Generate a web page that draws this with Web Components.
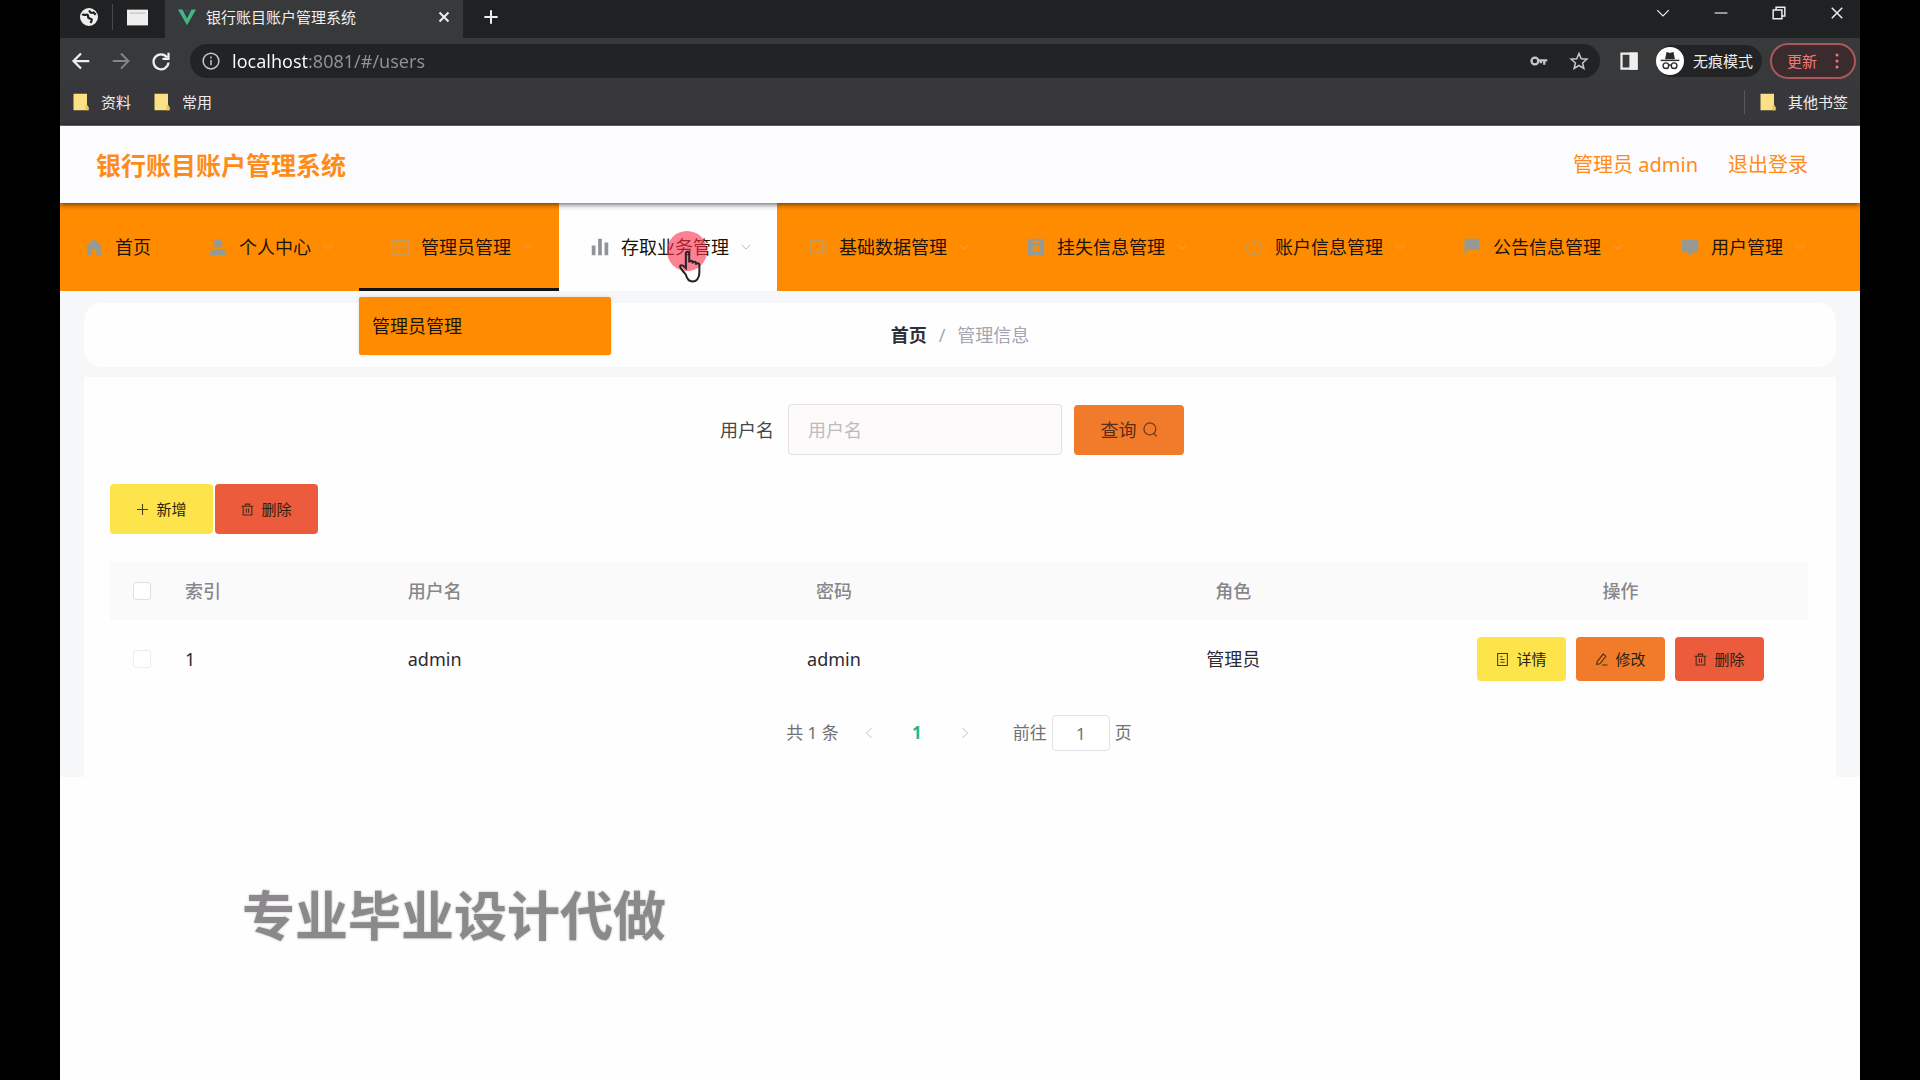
<!DOCTYPE html>
<html lang="zh-CN">
<head>
<meta charset="utf-8">
<title>银行账目账户管理系统</title>
<style>
body{margin:0;background:#000;font-family:"Noto Sans","Noto Sans CJK SC",sans-serif;font-size:18px;line-height:24px;color:#2b2b2f}
</style>
</head>
<body>
<browser-window></browser-window>
<script>
const ICONS={
globe:'<circle cx="12" cy="12" r="11" fill="currentColor"/><path d="M3 8c3 3 5 0 7 1s-1 4 3 5 3 2 1 6M13 3c-1 3 2 4 5 3l3 3" fill="none" stroke="#202122" stroke-width="3"/>',
vue:'<path d="M0 2h6l6 12 6-12h6L12 23z" fill="#42b883" stroke="none"/><path d="M8 2l4 7 4-7z" fill="#35495e" stroke="none"/>',
window:'<path d="M0 3h24v18H0z" fill="#eee" stroke="none"/><path d="M3 6h18v2H3z" fill="#cfcfcf" stroke="none"/>',
close:'<path d="M3 3l18 18M21 3L3 21"/>',
plus:'<path d="M12 2v20M2 12h20"/>',
down:'<path d="M2 7l10 10L22 7"/>',
up:'<path d="M2 17L12 7l10 10"/>',
left:'<path d="M17 2L7 12l10 10"/>',
right:'<path d="M7 2l10 10L7 22"/>',
min:'<path d="M1 12h22"/>',
restore:'<path d="M2 7h15v15H2zM7 7V2h15v15h-5"/>',
back:'<path d="M23 12H3M12 2L2 12l10 10"/>',
forward:'<path d="M1 12h20M12 2l10 10-10 10"/>',
reload:'<path d="M20 7a10 10 0 1 0 2 7M22 1v8h-8"/>',
info:'<circle cx="12" cy="12" r="10.500"/><path d="M12 10.500v7M12 6v2.500"/>',
key:'<circle cx="6.500" cy="12" r="4.500"/><path d="M11 11h12M19 11v6M14.500 11v4"/>',
star:'<path d="M12 2l3 7 7.500.600-5.700 5 1.700 7.400L12 18l-6.500 4 1.700-7.400-5.700-5L9 9z"/>',
panel:'<path d="M2 2h20v20H2z"/><path d="M14 2h8v20h-8z" fill="currentColor"/>',
spy:'<circle cx="12" cy="12" r="12" fill="#fff" stroke="none"/><g stroke="#2b2c2e" stroke-width="1.200"><path d="M8.500 10l1-5 2.500.800L14.500 5l1 5z" fill="#2b2c2e"/><path d="M4 11.500h16"/><circle cx="8.500" cy="16" r="2.400"/><circle cx="15.500" cy="16" r="2.400"/><path d="M11 15.500h2"/></g>',
dots:'<g fill="currentColor" stroke="none"><circle cx="12" cy="4" r="2"/><circle cx="12" cy="12" r="2"/><circle cx="12" cy="20" r="2"/></g>',
folder:'<path d="M2 1h18v15l2 3v4H2z" fill="#fbe184" stroke="none"/><path d="M18 16h2l2 3v4h-4z" fill="#e9c658" stroke="none"/>',
home:'<path d="M12 1l12 12h-3v10h-6v-8H9v8H3V13H0z" fill="currentColor" stroke="none"/>',
user:'<g fill="currentColor" stroke="none"><circle cx="12" cy="7" r="6"/><path d="M1 23c0-6 3-8 8-8h6c5 0 8 2 8 8z"/></g>',
mail:'<path d="M1 3h23v19H1zM5 5l7 8 8-8"/>',
bars:'<path d="M1 10h5v13H1zM9.500 1h5v22h-5zM18 6h5v17h-5z" fill="currentColor" stroke="none"/>',
square:'<path d="M2 3h16v17H2zM22 3v19"/>',
sheet:'<path fill-rule="evenodd" d="M1 1h22v22H1zM8 4v3h8V4zM8 11v7h8v-7zM11 13h2v3h-2z" fill="currentColor" stroke="none"/>',
power:'<path d="M7 3.500a10 10 0 1 0 10 0M12 1v10"/>',
flag:'<path d="M2 1h20v15H6l-4 7z" fill="currentColor" stroke="none"/>',
chat:'<path d="M1 2h22v17h-6l-5 4-5-4H1z" fill="currentColor" stroke="none"/>',
search:'<circle cx="11" cy="11" r="9.500"/><path d="M17 18l5 5"/>',
trash:'<path d="M1 6h22M8 6V2h8v4M4 6v16h16V6M10 10v8M14 10v8"/>',
doc:'<path d="M3 1h18v22H3zM8 7h4M8 12h8M8 17h8"/>',
edit:'<path d="M4 16L15 2l5 4L9 20l-6 1zM13 22h10"/>',
hand:'<path d="M7 22C5 19 1 16 2 14c1-1 3 0 5 2V3c0-2 3-2 3 0v8c0-2 3-2 3 0v1c0-2 3-2 3 0v1c0-2 3-1 3 0v7c0 4-2 8-6 8-3 0-5-2-6-6z"/>'
};
const component=(tag,css,html)=>customElements.define(tag,class extends HTMLElement{
  constructor(){
    super();
    const t=document.createElement('template');
    t.innerHTML='<style>*{box-sizing:border-box}button,input{font:inherit;color:inherit;margin:0;border:0;padding:0;background:none;outline:0}a{color:inherit;text-decoration:none}'+css+'</style>'+(typeof html==='string'?html:html(this));
    this.attachShadow({mode:'open'}).append(t.content.cloneNode(true));
  }
});

component('ui-icon',
 ':host{display:inline-flex;flex:none;width:var(--size,18px);height:var(--size,18px)}svg{width:100%;height:100%;fill:none;stroke:currentColor;stroke-width:var(--stroke,2);overflow:visible}',
 el=>`<svg viewBox="0 0 24 24" aria-hidden="true">${ICONS[el.getAttribute('name')]}</svg>`);

component('browser-tabs',`
:host{display:flex;height:38px;background:#202122;color:#eee;font-size:15px}
.pins{display:flex;align-items:center;gap:14px;width:105px;padding:0 0 4px 20px}
.pins i{width:1px;height:26px;background:#48494b}
.tab{display:flex;align-items:center;width:298px;padding:0 13px 4px;gap:10px;background:#38393b}
.tab span{flex:1}
button{display:flex;align-items:center;justify-content:center}
.new{width:56px;padding-bottom:4px}
.controls{display:flex;gap:44px;margin-left:auto;padding:0 16px 12px 0}
`,`<div class="pins"><ui-icon name="globe"></ui-icon><i></i><ui-icon name="window" style="--size:21px"></ui-icon></div>
<div class="tab"><ui-icon name="vue"></ui-icon><span>银行账目账户管理系统</span><button aria-label="关闭标签页"><ui-icon name="close" style="--size:12px;--stroke:4"></ui-icon></button></div>
<button class="new" aria-label="新标签页"><ui-icon name="plus" style="--size:16px;--stroke:3"></ui-icon></button>
<div class="controls"><button aria-label="搜索标签页"><ui-icon name="down" style="--size:14px"></ui-icon></button><button aria-label="最小化"><ui-icon name="min" style="--size:14px"></ui-icon></button><button aria-label="还原"><ui-icon name="restore" style="--size:14px;--stroke:2.500"></ui-icon></button><button aria-label="关闭"><ui-icon name="close" style="--size:14px;--stroke:2.500"></ui-icon></button></div>`);

component('address-bar',`
:host{display:flex;align-items:center;height:46px;padding:0 4px 0 12px;background:#38393b;color:#eee;font-size:15px}
button{display:flex;align-items:center}
.moves{display:flex;gap:22px;margin-right:20px}
.moves button:nth-child(2){color:#858688}
.field{display:flex;align-items:center;flex:1;height:34px;padding:0 12px;border-radius:17px;background:#222325;color:#c8c8c8}
.field input{flex:1;min-width:0;height:34px;margin-left:12px;font-size:18px;color:#919294;background:linear-gradient(90deg,#fff 77px,#919294 77px);-webkit-background-clip:text;background-clip:text;-webkit-text-fill-color:transparent}
.field button{margin-left:22px}
.side{margin:0 18px 0 20px}
.private{height:32px;gap:9px;padding-right:9px;border-radius:16px;background:#222325}
.update{height:36px;gap:11px;margin-left:8px;padding:0 8px 0 15px;border:2px solid #a9585c;border-radius:18px;background:#3a2c2e;color:#f07a75}
`,`<div class="moves"><button aria-label="后退"><ui-icon name="back" style="--stroke:3"></ui-icon></button><button aria-label="前进"><ui-icon name="forward" style="--stroke:2.500"></ui-icon></button><button aria-label="重新加载"><ui-icon name="reload" style="--stroke:3"></ui-icon></button></div>
<div class="field"><ui-icon name="info"></ui-icon><input aria-label="地址" value="localhost:8081/#/users"><button aria-label="密码"><ui-icon name="key" style="--stroke:3"></ui-icon></button><button aria-label="收藏"><ui-icon name="star"></ui-icon></button></div>
<button class="side" aria-label="侧边栏"><ui-icon name="panel" style="--stroke:3"></ui-icon></button>
<button class="private"><ui-icon name="spy" style="--size:28px"></ui-icon>无痕模式</button>
<button class="update">更新<ui-icon name="dots"></ui-icon></button>`);

component('bookmark-bar',`
:host{display:flex;align-items:center;gap:22px;height:42px;padding:0 12px 6px;background:#38373b;border-bottom:1px solid #77767a;color:#eee;font-size:15px}
a{display:flex;align-items:center;gap:11px}
.other{margin-left:auto;border-left:1px solid #58585a;padding-left:14px}
`,`<a href="#"><ui-icon name="folder"></ui-icon>资料</a><a href="#"><ui-icon name="folder"></ui-icon>常用</a><a class="other" href="#"><ui-icon name="folder"></ui-icon>其他书签</a>`);

component('app-header',`
:host{display:flex;align-items:center;height:77px;padding:0 52px 0 36px;background:#fcfcfe;color:#ff8c1a;font-size:20px;position:relative;z-index:2;box-shadow:0 1px 6px rgba(0,0,0,.7)}
h1{flex:1;margin:0;font-size:25px;line-height:32px;font-weight:700}
a{margin-left:30px}
`,`<h1>银行账目账户管理系统</h1><span>管理员 admin</span><a href="#">退出登录</a>`);

component('nav-item',`
:host{display:block;position:relative;color:#1c1408}
a{display:flex;align-items:center;height:88px;gap:12px;padding:0 26px 0 32px;white-space:nowrap}
ui-icon{color:#979a92}
.arrow{--size:10px;color:#ff9d5d}
:host([plain]) a{padding:0 26px 0 25px}
:host([plain]) .arrow{display:none}
:host([open]) a{border-bottom:3px solid #111;padding-top:3px}
:host([faint]) .lead{color:#c79b5c}
:host([hot]){background:#fefefe}
:host([hot]) .lead{color:#909399}
:host([hot]) .arrow{color:#a9abb0}
`,el=>`<a href="#"><ui-icon class="lead" name="${el.getAttribute('icon')}"></ui-icon><span><slot></slot></span><ui-icon class="arrow" name="${el.hasAttribute('open')?'up':'down'}"></ui-icon></a><slot name="over"></slot>`);

component('sub-menu',`
:host{position:absolute;z-index:3;top:94px;left:0;width:252px;background:#ff8c00;border-radius:2px;box-shadow:0 0 4px rgba(0,0,0,.12)}
a{display:flex;align-items:center;height:58px;padding:0 13px}
`,`<a href="#"><slot></slot></a>`);

component('click-pointer',`
:host{position:absolute;z-index:3;left:108px;top:28px;width:40px;height:40px;border-radius:50%;background:rgba(248,45,75,.6);color:#24242c;pointer-events:none}
ui-icon{--size:27px;--stroke:1.800;position:absolute;left:11px;top:19px}
`,`<ui-icon name="hand"></ui-icon>`);

component('app-nav',`
:host{display:flex;height:88px;background:#ff8c00}
nav{display:flex}
`,`<nav><nav-item icon="home" plain>首页</nav-item><nav-item icon="user">个人中心</nav-item><nav-item icon="mail" open faint>管理员管理<sub-menu slot="over">管理员管理</sub-menu></nav-item><nav-item icon="bars" hot>存取业务管理<click-pointer slot="over"></click-pointer></nav-item><nav-item icon="square" faint>基础数据管理</nav-item><nav-item icon="sheet">挂失信息管理</nav-item><nav-item icon="power" faint>账户信息管理</nav-item><nav-item icon="flag">公告信息管理</nav-item><nav-item icon="chat">用户管理</nav-item></nav>`);

component('crumb-bar',`
:host{display:flex;align-items:center;justify-content:center;gap:12px;height:64px;border-radius:18px;background:#fefefe;color:#a3a5b4}
a{color:#303038;font-weight:700}
`,`<a href="#">首页</a><span>/</span><span>管理信息</span>`);

component('action-button',`
:host{display:inline-flex;font-size:15px;color:#2b2210}
button{display:flex;align-items:center;justify-content:center;gap:7px;width:103px;height:50px;border-radius:4px;background:#fde44b;cursor:pointer}
ui-icon{--size:13px;opacity:.85}
:host([tone=edit]) button{background:#f27a2b}
:host([tone=remove]) button{background:#eb5b3c}
:host([small]) button{width:89px;height:44px}
:host([search]){font-size:18px;color:#593015}
:host([search]) button{flex-direction:row-reverse;width:110px;gap:6px}
:host([search]) ui-icon{--size:15px}
`,el=>`<button><ui-icon name="${el.getAttribute('icon')}"></ui-icon><span><slot></slot></span></button>`);

component('search-form',`
:host{display:block}
form{display:flex;align-items:center;justify-content:center;padding-right:14px}
label{margin-right:14px;color:#47474c}
input{width:274px;height:51px;margin-right:12px;padding:0 19px;border:1px solid #e4dfe2;border-radius:4px;background:#fcfafb}
input::placeholder{color:#bcbabd;opacity:1}
`,`<form><label for="name">用户名</label><input id="name" placeholder="用户名"><action-button search tone="edit" icon="search">查询</action-button></form>`);

component('user-table',`
:host{display:block}
table{width:100%;table-layout:fixed;border-collapse:collapse}
th{height:58px;padding:0;background:#fafafa;color:#87878b;font-weight:500}
td{height:78px;padding:0;text-align:center}
.check{width:63px}
.index{width:62px;text-align:left;padding-left:12px}
.ops{width:375px}
input{appearance:none;display:block;width:18px;height:18px;margin:0 auto;border:1px solid #dcdfe6;border-radius:3px;background:#fff}
td input{border-color:#ebecef}
.row{display:flex;justify-content:center;gap:10px}
`,`<table><thead><tr><th class="check"><input type="checkbox" aria-label="全选"></th><th class="index">索引</th><th>用户名</th><th>密码</th><th>角色</th><th class="ops">操作</th></tr></thead><tbody><tr><td><input type="checkbox" aria-label="选择第1行"></td><td class="index">1</td><td>admin</td><td>admin</td><td>管理员</td><td><div class="row"><action-button small icon="doc">详情</action-button><action-button small tone="edit" icon="edit">修改</action-button><action-button small tone="remove" icon="trash">删除</action-button></div></td></tr></tbody></table>`);

component('page-bar',`
:host{display:flex;align-items:center;justify-content:center;height:36px;font-size:17px;color:#707176}
button{display:flex;align-items:center;justify-content:center;width:48px;height:36px}
.move{color:#bcbec4}
.now{color:#20b886;font-weight:700}
.total{margin-right:6px}
label{margin:0 5px 0 24px}
input{width:58px;height:36px;border:1px solid #e2e2e6;border-radius:4px;background:#fff;text-align:center}
.unit{margin-left:5px}
`,`<span class="total">共 1 条</span><button class="move" aria-label="上一页"><ui-icon name="left" style="--size:12px"></ui-icon></button><button class="now">1</button><button class="move" aria-label="下一页"><ui-icon name="right" style="--size:12px"></ui-icon></button><label for="page">前往</label><input id="page" value="1"><span class="unit">页</span>`);

component('user-page',`
:host{display:block;background:#f6f7f9;padding:12px 24px 0}
.card{margin-top:10px;padding:27px 28px 26px 26px;background:#fefefe}
.tools{display:flex;gap:2px;margin:29px 0 28px}
page-bar{margin-top:17px}
`,`<crumb-bar></crumb-bar><div class="card"><search-form></search-form><div class="tools"><action-button icon="plus">新增</action-button><action-button tone="remove" icon="trash">删除</action-button></div><user-table></user-table><page-bar></page-bar></div>`);

component('video-mark',`
:host{position:absolute;left:182px;top:884px;font-size:53px;line-height:64px;font-weight:700;color:#8b898c;white-space:nowrap;text-shadow:0 0 2px #ccc,0 0 3px #ddd}
`,`<slot></slot>`);

component('browser-window',`
:host{display:block;position:relative;margin:0 60px;min-height:100vh;background:#fefefe;overflow:hidden}
`,`<browser-tabs></browser-tabs><address-bar></address-bar><bookmark-bar></bookmark-bar><app-header></app-header><app-nav></app-nav><user-page></user-page><video-mark>专业毕业设计代做</video-mark>`);
</script>
</body>
</html>
